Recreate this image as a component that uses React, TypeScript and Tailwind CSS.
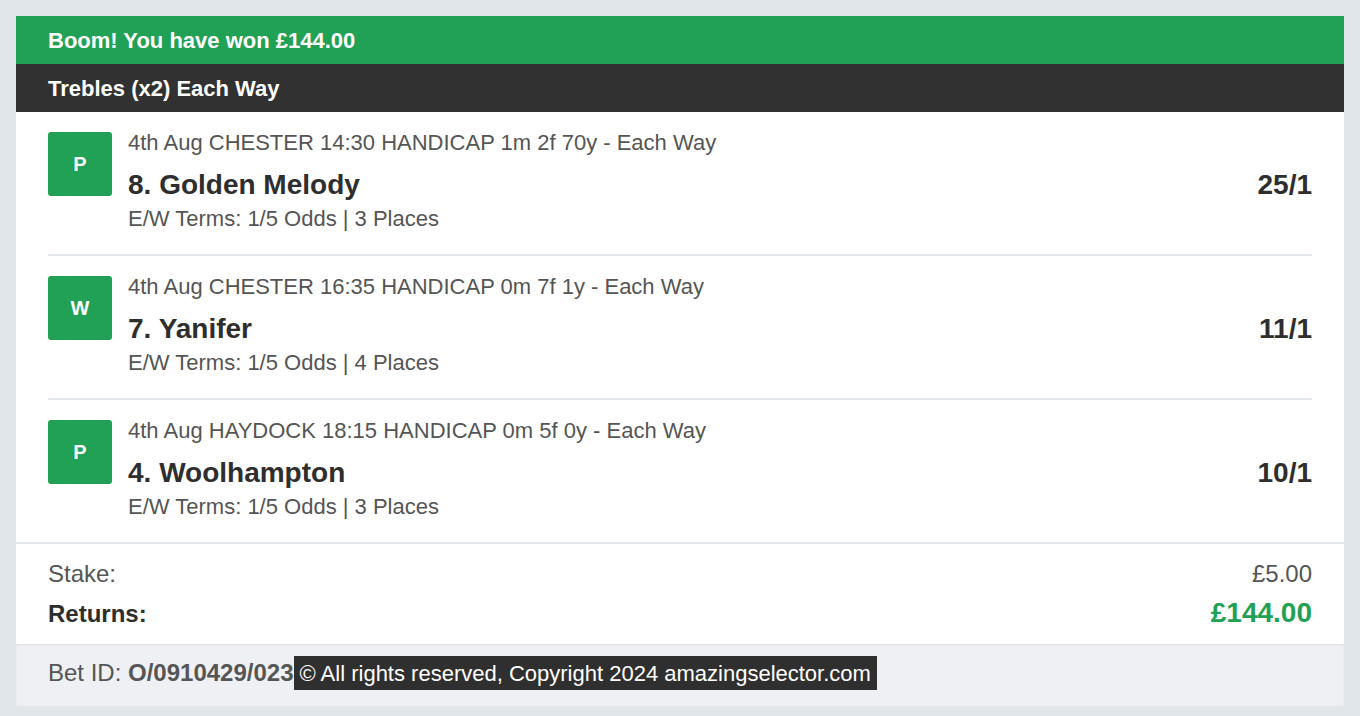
import React from "react";

type Leg = {
  badge: string;
  meta: string;
  name: string;
  terms: string;
  odds: string;
};

const legs: Leg[] = [
  {
    badge: "P",
    meta: "4th Aug CHESTER 14:30 HANDICAP 1m 2f 70y - Each Way",
    name: "8. Golden Melody",
    terms: "E/W Terms: 1/5 Odds | 3 Places",
    odds: "25/1",
  },
  {
    badge: "W",
    meta: "4th Aug CHESTER 16:35 HANDICAP 0m 7f 1y - Each Way",
    name: "7. Yanifer",
    terms: "E/W Terms: 1/5 Odds | 4 Places",
    odds: "11/1",
  },
  {
    badge: "P",
    meta: "4th Aug HAYDOCK 18:15 HANDICAP 0m 5f 0y - Each Way",
    name: "4. Woolhampton",
    terms: "E/W Terms: 1/5 Odds | 3 Places",
    odds: "10/1",
  },
];

export default function App() {
  return (
    <div
      className="min-h-[716px] w-full bg-[#e1e6ea] p-4 pb-[10px]"
      style={{ fontFamily: '"Liberation Sans", Arial, sans-serif' }}
    >
      <div className="flex flex-col bg-white">
        <div className="flex h-12 items-center bg-[#21a155] px-8 text-[22px] font-bold text-white">
          Boom! You have won £144.00
        </div>
        <div className="flex h-12 items-center bg-[#313131] px-8 text-[22px] font-bold text-white">
          Trebles (x2) Each Way
        </div>

        <div className="flex flex-col px-8">
          {legs.map((leg, i) => (
            <div
              key={i}
              className={
                i < legs.length - 1
                  ? "flex pt-5 pb-[22px] border-b-2 border-[#e2e6ea]"
                  : "flex pt-5 pb-[22px]"
              }
            >
              <div className="flex h-16 w-16 shrink-0 items-center justify-center rounded-[3px] bg-[#21a155] text-[20px] font-bold text-white">
                {leg.badge}
              </div>
              <div className="ml-4 flex flex-1 flex-col">
                <div className="text-[22px] leading-[21px] text-[#555555]">{leg.meta}</div>
                <div className="mt-[16px] flex items-baseline justify-between text-[28px] font-bold leading-[32px] text-[#2e2e2e]">
                  <span>{leg.name}</span>
                  <span>{leg.odds}</span>
                </div>
                <div className="mt-[5px] text-[22px] leading-[26px] text-[#555555]">{leg.terms}</div>
              </div>
            </div>
          ))}
        </div>

        <div className="flex flex-col border-t-2 border-[#e2e6ea] px-8 pt-[16px] pb-[12px]">
          <div className="flex items-baseline justify-between text-[24px] leading-[28px] text-[#555555]">
            <span>Stake:</span>
            <span>£5.00</span>
          </div>
          <div className="mt-[7px] flex items-baseline justify-between leading-[36px]">
            <span className="text-[24px] font-bold text-[#2e2e2e]">Returns:</span>
            <span className="text-[28px] font-bold text-[#21a155]">£144.00</span>
          </div>
        </div>

        <div className="flex h-[62px] items-start bg-[#eef0f4] px-8 pt-3 shadow-[inset_0_1px_2px_rgba(0,0,0,0.08)]">
          <span className="text-[24px] leading-[34px] text-[#555555]">
            Bet ID: <span className="font-bold">O/0910429/023</span>
          </span>
          <span className="flex h-[34px] items-center bg-[#2f2f2f] px-[6px] text-[22px] text-white">
            © All rights reserved, Copyright 2024 amazingselector.com
          </span>
        </div>
      </div>
    </div>
  );
}
